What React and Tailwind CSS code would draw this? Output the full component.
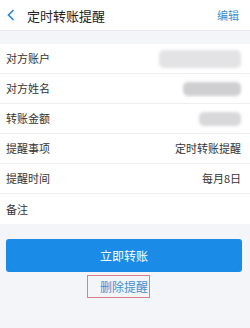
import React from 'react';

const rows = [
  { label: '对方账户', blur: 'w-[82px] h-[18px] bg-[#e3e3e5]' },
  { label: '对方姓名', blur: 'w-[58px] h-[14px] bg-[#cfcfd1]' },
  { label: '转账金额', blur: 'w-[42px] h-[14px] bg-[#d8d8da]' },
  { label: '提醒事项', value: '定时转账提醒' },
  { label: '提醒时间', value: '每月8日' },
  { label: '备注', value: '' },
];

const App = () => {
  return (
    <div
      className="w-[250px] h-[328px] bg-[#f4f5f9] overflow-hidden"
      style={{ fontFamily: '"Noto Sans CJK SC", "Noto Sans", sans-serif' }}
    >
      {/* Header */}
      <div className="h-[31px] bg-white flex items-center border-b border-[#e6e7ec]">
        <svg width="8" height="12" viewBox="0 0 8 12" className="ml-[7px]">
          <path d="M6.5 1 L1.5 6 L6.5 11" fill="none" stroke="#2f86d6" strokeWidth="1.7" />
        </svg>
        <span className="ml-[12px] text-[13px] text-[#222] leading-none">定时转账提醒</span>
        <span className="ml-auto mr-[11px] text-[11px] text-[#3a8ed0] leading-none">编辑</span>
      </div>

      {/* Detail list */}
      <div className="mt-[13px] bg-white">
        {rows.map((row, i) => (
          <div
            key={row.label}
            className={`h-[30px] flex items-center pl-[6px] pr-[9px] ${i < rows.length - 1 ? 'border-b border-[#eceef2]' : ''}`}
          >
            <span className="text-[11px] text-[#333] leading-none">{row.label}</span>
            <span className="ml-auto text-[11px] text-[#333] leading-none">
              {row.blur ? (
                <span className={`block ${row.blur} rounded-[5px] blur-[1.5px]`} />
              ) : (
                row.value
              )}
            </span>
          </div>
        ))}
      </div>

      {/* Actions */}
      <div className="pt-[15px]">
        <button className="ml-[6px] w-[236px] h-[33px] rounded-[3px] bg-[#1a8be6] text-white text-[12px] flex items-center justify-center">
          立即转账
        </button>
        <div className="ml-[87px] mt-[3px] w-[63px] h-[23px] border border-[#d9808a] flex items-center justify-end pr-[1px]">
          <span className="text-[12px] text-[#3f8fd0] leading-none">删除提醒</span>
        </div>
      </div>
    </div>
  );
};

export default App;
